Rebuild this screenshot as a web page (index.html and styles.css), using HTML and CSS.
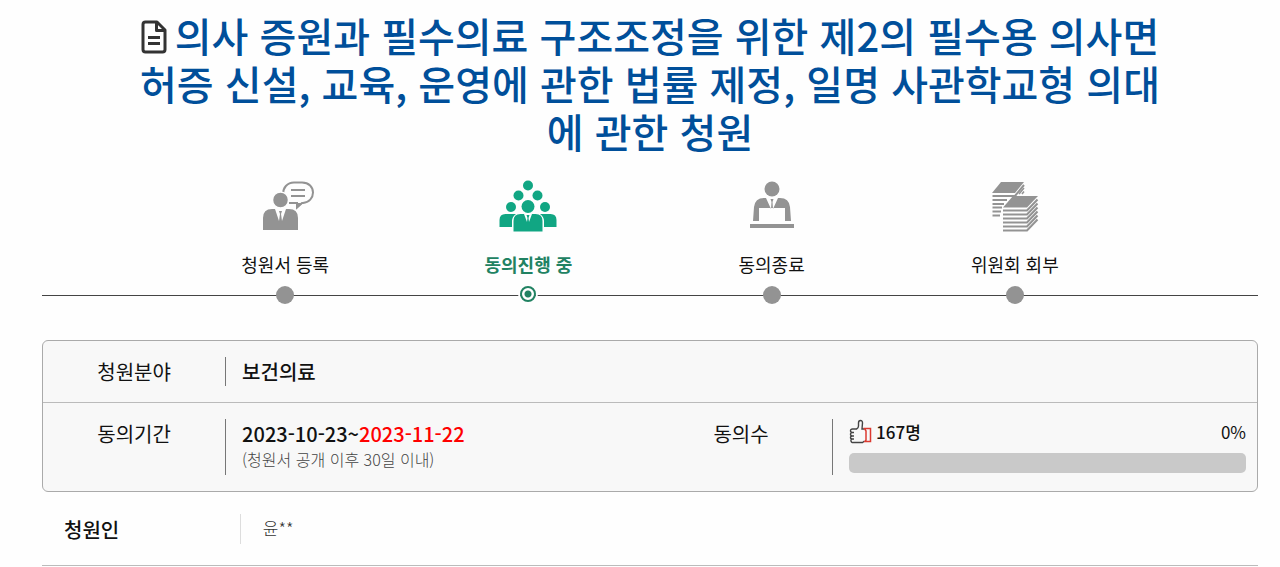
FILE: index.html
```html
<!DOCTYPE html>
<html lang="ko">
<head>
<meta charset="utf-8">
<meta name="viewport" content="width=device-width, initial-scale=1">
<title>청원 상세</title>
<link rel="stylesheet" href="styles.css">
</head>
<body>
<main class="petition">
  <h1 class="title"><svg class="title-icon" viewBox="0 0 26 34" aria-hidden="true"><path d="M4.500 2H16l8 8v19.500a2.500 2.500 0 0 1-2.500 2.500h-17A2.500 2.500 0 0 1 2 29.500v-25A2.500 2.500 0 0 1 4.500 2Z M15.500 2v8.500H24" fill="none" stroke="#333" stroke-width="3" stroke-linejoin="round"/><path d="M7 17.500h12M7 23.500h12" stroke="#333" stroke-width="3"/></svg>의사 증원과 필수의료 구조조정을 위한 제2의 필수용 의사면허증 신설, 교육, 운영에 관한 법률 제정, 일명 사관학교형 의대에 관한 청원</h1>

  <ol class="steps">
    <li class="step">
      <svg class="step-icon" viewBox="0 0 60 56" aria-hidden="true">
        <path d="M28 17c0-6 4-11.500 11-11.500h8c7 0 11 4.500 11 10s-4 10-10 10.500h-1l-5 4.500V26h-8" fill="none" stroke="#939393" stroke-width="2"/>
        <path d="M42 26v5.500l6-5.500Z" fill="#939393"/>
        <path d="M36 13h14M36 19h14" stroke="#939393" stroke-width="2.200"/>
        <circle cx="25.500" cy="23" r="8" fill="#939393" stroke="#fefefe" stroke-width="1.500"/>
        <path d="M8 53V41q0-9 9-9h3l4 12 1-7-1-3h3l-1 3 1 7 4-12h3q9 0 9 9v12Z" fill="#939393"/>
      </svg>
      <span class="step-label">청원서 등록</span>
      <span class="dot"></span>
    </li>
    <li class="step step-active" aria-current="step">
      <svg class="step-icon" viewBox="0 0 60 56" aria-hidden="true">
        <g fill="#11a683">
          <circle cx="30" cy="8.500" r="5"/><circle cx="20.500" cy="18.500" r="5"/><circle cx="39.500" cy="18.500" r="5"/>
          <circle cx="13" cy="30" r="5"/><circle cx="47" cy="30" r="5"/><circle cx="30" cy="29.500" r="6.500"/>
          <path d="M1.500 50V43q0-6 6-6H18q-4 3-4 7v6ZM58.500 50V43q0-6-6-6H42q4 3 4 7v6Z"/>
          <path d="M15.500 54.500V44q0-7 7-7H26l3 8 .5-4-1-3h3l-1 3 .5 4 3-8h3.500q7 0 7 7v10.500Z"/>
        </g>
      </svg>
      <span class="step-label">동의진행 중</span>
      <span class="dot"></span>
    </li>
    <li class="step">
      <svg class="step-icon" viewBox="0 0 60 56" aria-hidden="true">
        <g fill="#939393">
          <circle cx="30" cy="12" r="7.500"/>
          <path d="M11 44l1-14q1-9 10-9h2l5 11 .5-7-1-3h3l-1 3 .5 7 5-11h2q9 0 10 9l1 14h-6V31H17v13Z"/>
          <path d="M8 47h44v4H8Z"/>
        </g>
      </svg>
      <span class="step-label">동의종료</span>
      <span class="dot"></span>
    </li>
    <li class="step">
      <svg class="step-icon" viewBox="0 0 60 56" aria-hidden="true">
        <path d="M16 5h23l-9 11H7Z" fill="#939393"/>
        <path d="M7.500 19H30L39 8M7.500 23H22M7.500 27H19M7.500 30.500H17M7.500 34.500H16M7.500 38.500H15" fill="none" stroke="#939393" stroke-width="2"/>
        <path d="M34 17l5-6M37 17l2-2.500" stroke="#939393" stroke-width="1.500"/>
        <path d="M28 19h25l-11 11.500H18Z" fill="#939393"/>
        <path d="M18 33.500H42L52.500 22.500M18 37.500H42L52.500 26.500M18 41.500H42L52.500 30.500M18 45.500H42L52.500 34.500M18 49.500H42L52.500 38.500M18 53.500H42L52.500 42.500" fill="none" stroke="#939393" stroke-width="2"/>
      </svg>
      <span class="step-label">위원회 회부</span>
      <span class="dot"></span>
    </li>
  </ol>

  <dl class="info">
    <div class="info-item info-wide">
      <dt>청원분야</dt>
      <dd><strong>보건의료</strong></dd>
    </div>
    <div class="info-item">
      <dt>동의기간</dt>
      <dd>
        <strong>2023-10-23~<span class="deadline">2023-11-22</span></strong>
        <small>(청원서 공개 이후 30일 이내)</small>
      </dd>
    </div>
    <div class="info-item">
      <dt id="agree-label">동의수</dt>
      <dd>
        <div class="agree">
          <svg class="thumb" viewBox="0 0 24 26" aria-hidden="true">
            <path d="M15.500 10h-2.500l.5-6q0-2.500-2-2.500T9.500 4v3q0 2-2 3H3.500q-2 0-2 1.700T3.500 13.500H5M3.500 13.500q-2 0-2 1.700T3.500 17H5M3.500 17q-2 0-2 1.500t2 1.500H5M3.500 20q-2 0-1.500 2t2.500 1.500h9l2-1.500" fill="none" stroke="#444" stroke-width="1.400"/>
            <path d="M15.500 9.500h6v13h-5.500l1-1.500V12Z" fill="none" stroke="#dc3a30" stroke-width="1.500"/>
          </svg>
          <span class="count">167명</span>
          <span class="percent">0%</span>
        </div>
        <progress class="bar" value="0" max="100" aria-labelledby="agree-label"></progress>
      </dd>
    </div>
  </dl>

  <dl class="author">
    <dt>청원인</dt>
    <dd>윤**</dd>
  </dl>
</main>
</body>
</html>
```
FILE: styles.css
```css
* {
  box-sizing: border-box;
}

body {
  margin: 0;
  background: #fefefe;
  color: #111;
  font-family: "Noto Sans CJK KR", "Noto Sans", sans-serif;
  font-size: 20px;
  line-height: 28px;
}

dl,
dd,
ol {
  margin: 0;
  padding: 0;
}

.petition {
  padding: 11px 22px 0 42px;
}

.title {
  margin: 0;
  padding: 0 7%;
  color: #004f9a;
  font-size: 40px;
  font-weight: 500;
  line-height: 48px;
  text-align: center;
}

.title-icon {
  width: 26px;
  height: 34px;
  margin-right: 8px;
  vertical-align: -2px;
}

.steps {
  display: grid;
  grid-template-columns: repeat(4, 1fr);
  margin-top: 22px;
  padding: 0 10%;
  list-style: none;
  background: linear-gradient(#444, #444) left 0 bottom 8px / 100% 1px no-repeat;
}

.step {
  display: flex;
  flex-direction: column;
  align-items: center;
}

.step-icon {
  width: 60px;
  height: 56px;
}

.step-label {
  margin: 17px 0 8px;
  font-size: 18px;
}

.dot {
  width: 18px;
  height: 18px;
  border-radius: 50%;
  background: #939393;
}

.step-active .step-label {
  color: #218262;
  font-weight: 700;
}

.step-active .dot {
  width: 16px;
  height: 16px;
  border: 2px solid #218262;
  background: radial-gradient(circle, #218262 3px, #fff 4px);
  box-shadow: 0 0 0 2px #fefefe;
}

.info {
  display: grid;
  grid-template-columns: 1fr 1fr;
  margin-top: 36px;
  border: 1px solid #aaa;
  border-radius: 6px;
  background: #f8f8f8;
}

.info-item {
  display: grid;
  grid-template-columns: 30% 1fr;
  padding: 16px 0;
}

.info-wide {
  grid-column: 1 / -1;
  grid-template-columns: 15% 1fr;
  border-bottom: 1px solid #bbb;
}

.info dt {
  padding-top: 1px;
  text-align: center;
}

.info dd {
  padding: 0 11px 0 16px;
  border-left: 1px solid #777;
}

.info strong {
  display: block;
  padding-top: 1px;
  font-weight: 500;
}

.deadline {
  color: #f00;
}

.info small {
  display: block;
  color: #444;
  font-size: 16px;
  font-weight: 300;
  line-height: 22px;
}

.agree {
  display: flex;
  align-items: center;
  font-size: 17px;
  line-height: 26px;
}

.thumb {
  width: 24px;
  height: 26px;
  margin-right: 3px;
}

.count {
  font-weight: 500;
}

.percent {
  margin-left: auto;
}

.bar {
  display: block;
  width: 100%;
  height: 20px;
  margin: 8px 0 2px;
  appearance: none;
  border: 0;
  border-radius: 5px;
  overflow: hidden;
  background: #c9c9c9;
}

.bar::-webkit-progress-bar {
  background: #c9c9c9;
}

.bar::-webkit-progress-value {
  background: #218262;
}

.author {
  display: flex;
  padding: 22px 22px 21px;
  border-bottom: 1px solid #bbb;
}

.author dt {
  width: 15%;
  padding-top: 2px;
  font-weight: 500;
}

.author dd {
  padding-left: 22px;
  border-left: 1px solid #ddd;
  color: #333;
  font-size: 17px;
  font-weight: 300;
}
```
